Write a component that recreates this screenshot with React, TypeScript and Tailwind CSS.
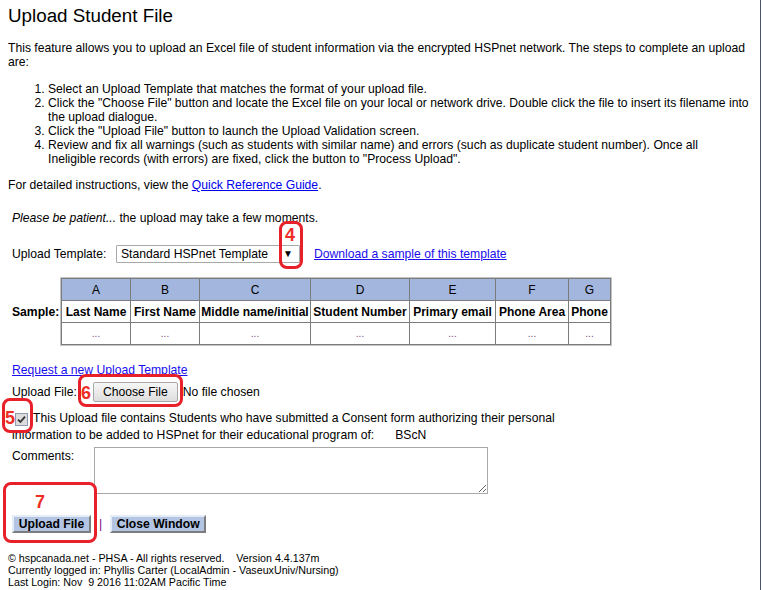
const columns = [
  { key: 'A', label: 'Last Name', w: 'w-[69px]' },
  { key: 'B', label: 'First Name', w: 'w-[69px]' },
  { key: 'C', label: 'Middle name/initial', w: 'w-[111px]' },
  { key: 'D', label: 'Student Number', w: 'w-[99px]' },
  { key: 'E', label: 'Primary email', w: 'w-[86px]' },
  { key: 'F', label: 'Phone Area', w: 'w-[73px]' },
  { key: 'G', label: 'Phone', w: 'w-[42px]' },
]

// each step split at the same place the original page wraps
const steps = [
  ['Select an Upload Template that matches the format of your upload file.'],
  [
    'Click the "Choose File" button and locate the Excel file on your local or network drive. Double click the file to insert its filename into',
    'the upload dialogue.',
  ],
  ['Click the "Upload File" button to launch the Upload Validation screen.'],
  [
    'Review and fix all warnings (such as students with similar name) and errors (such as duplicate student number). Once all',
    'Ineligible records (with errors) are fixed, click the button to "Process Upload".',
  ],
]

function Callout({ className }: { className: string }) {
  return <div className={`absolute border-[3px] border-[#e8202a] rounded-[8px] pointer-events-none ${className}`} />
}

function CalloutNum({ n, className }: { n: string; className: string }) {
  return (
    <span className={`absolute font-bold text-[18px] leading-[18px] text-[#ee2e26] ${className}`}>{n}</span>
  )
}

export default function App() {
  return (
    <div className="relative w-[761px] h-[590px] overflow-hidden bg-white border-r border-[#4b5366] text-black text-[12.16px] leading-[14px] font-['Liberation_Sans',Arial,sans-serif]">
      <div className="px-2">
        <h1 className="mt-[5px] text-[18.8px] leading-[21px] font-normal">Upload Student File</h1>
        <p className="mt-[15px]">
          This feature allows you to upload an Excel file of student information via the encrypted HSPnet network. The steps to complete an upload
          <br />
          are:
        </p>
        <ol className="mt-[13px] pl-10 list-decimal">
          {steps.map((lines, i) => (
            <li key={i}>
              {lines.map((l, j) => (
                <span key={j} className="block whitespace-nowrap">{l}</span>
              ))}
            </li>
          ))}
        </ol>
        <p className="mt-[12px]">
          For detailed instructions, view the <a className="text-[#0000ee] underline">Quick Reference Guide</a>.
        </p>
      </div>

      <div className="px-3">
        <p className="mt-[19px]">
          <em>Please be patient...</em> the upload may take a few moments.
        </p>

        <div className="mt-[20px] flex items-center h-[18px]">
          <span className="w-[104px]">Upload Template:</span>
          <div className="w-[184px] h-[18px] border border-[#a9a9a9] rounded-[1px] flex items-center justify-between pl-1 pr-[6px]">
            <span>Standard HSPnet Template</span>
            <span className="text-[10px] leading-[10px]">▼</span>
          </div>
          <a className="ml-[14px] text-[#1a0dee] underline">Download a sample of this template</a>
        </div>

        <div className="mt-[14px] flex items-center">
          <span className="w-[48px] font-bold">Sample:</span>
          <div className="border border-[#c4c4c4]">
            <table className="border-collapse text-center text-[12px]">
              <tbody>
                <tr className="bg-[#a3b6dd] h-[22px]">
                  {columns.map((c) => (
                    <td key={c.key} className={`border border-[#7c7c7c] ${c.w}`}>{c.key}</td>
                  ))}
                </tr>
                <tr className="h-[22px]">
                  {columns.map((c) => (
                    <td key={c.key} className="border border-[#7c7c7c] font-bold whitespace-nowrap px-[1px]">{c.label}</td>
                  ))}
                </tr>
                <tr className="h-[22px]">
                  {columns.map((c) => (
                    <td key={c.key} className="border border-[#7c7c7c] text-[10px] text-[#7a4a7a]">...</td>
                  ))}
                </tr>
              </tbody>
            </table>
          </div>
        </div>

        <p className="mt-[17px]">
          <a className="text-[#1a0dee] underline">Request a new Upload Template</a>
        </p>

        <div className="mt-[5px] flex items-center">
          <span>Upload File:</span>
          <button className="ml-[16px] h-[20px] px-[9px] border border-[#a9a9a9] rounded-[2px] bg-gradient-to-b from-[#f7f7f7] to-[#dddddd] text-[12.16px]">
            Choose File
          </button>
          <span className="ml-[5px]">No file chosen</span>
        </div>

        <p className="mt-[8px] leading-[17px]">
          <span className="inline-flex align-[-2px] ml-[3px] mr-[5px] w-[13px] h-[13px] border border-[#8d9bb3] bg-[#dcdcdc] items-center justify-center">
            <svg width="9" height="9" viewBox="0 0 9 9">
              <path d="M1 4.6 L3.4 7 L8 1.6" fill="none" stroke="#333" strokeWidth="1.8" />
            </svg>
          </span>
          This Upload file contains Students who have submitted a Consent form authorizing their personal
          <br />
          information to be added to HSPnet for their educational program of:
          <span className="ml-[21px]">BScN</span>
        </p>

        <div className="mt-[3px] flex items-start">
          <span className="w-[82px] mt-[2px]">Comments:</span>
          <textarea className="w-[394px] h-[47px] border border-[#a9a9a9] resize-y" />
        </div>

        <div className="mt-[21px] flex items-center">
          <button className="h-[18px] w-[79px] bg-[#b3c5e2] border-2 border-t-[#e4ecf7] border-l-[#e4ecf7] border-b-[#7d7d7d] border-r-[#7d7d7d] font-bold text-[12.16px] leading-[14px]">
            Upload File
          </button>
          <span className="ml-[8px] text-[#800080]">|</span>
          <button className="ml-[8px] h-[18px] w-[96px] bg-[#b3c5e2] border-2 border-t-[#e4ecf7] border-l-[#e4ecf7] border-b-[#7d7d7d] border-r-[#7d7d7d] font-bold text-[12.16px] leading-[14px]">
            Close Window
          </button>
        </div>
      </div>

      <div className="px-2 mt-[19px] text-[10.7px] leading-[12px]">
        <p className="whitespace-pre">© hspcanada.net - PHSA - All rights reserved.    Version 4.4.137m</p>
        <p>Currently logged in: Phyllis Carter (LocalAdmin - VaseuxUniv/Nursing)</p>
        <p className="whitespace-pre">Last Login: Nov  9 2016 11:02AM Pacific Time</p>
      </div>

      <Callout className="left-[279px] top-[221px] w-[24px] h-[48px]" />
      <CalloutNum n="4" className="left-[285px] top-[226px]" />
      <Callout className="left-[78px] top-[374px] w-[105px] h-[33px]" />
      <CalloutNum n="6" className="left-[81px] top-[384px] text-[17px]" />
      <Callout className="left-[2px] top-[398px] w-[31px] h-[35px]" />
      <CalloutNum n="5" className="left-[5px] top-[409px] text-[17px]" />
      <Callout className="left-[3px] top-[482px] w-[94px] h-[61px]" />
      <CalloutNum n="7" className="left-[35px] top-[493px]" />
    </div>
  )
}
